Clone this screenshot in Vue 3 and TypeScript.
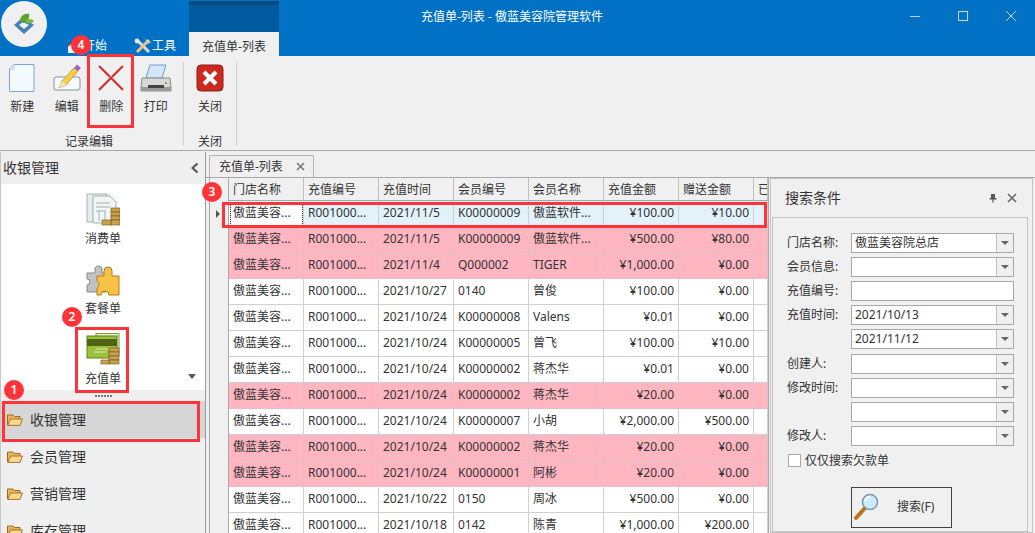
<script setup lang="ts">
interface Row { shop: string; no: string; time: string; member: string; name: string; amount: string; gift: string; pink?: boolean; sel?: boolean }
const S = '傲蓝美容...'
const N = 'R001000...'
const rows: Row[] = [
  { shop: S, no: N, time: '2021/11/5', member: 'K00000009', name: '傲蓝软件...', amount: '¥100.00', gift: '¥10.00', sel: true },
  { shop: S, no: N, time: '2021/11/5', member: 'K00000009', name: '傲蓝软件...', amount: '¥500.00', gift: '¥80.00', pink: true },
  { shop: S, no: N, time: '2021/11/4', member: 'Q000002', name: 'TIGER', amount: '¥1,000.00', gift: '¥0.00', pink: true },
  { shop: S, no: N, time: '2021/10/27', member: '0140', name: '曾俊', amount: '¥100.00', gift: '¥0.00' },
  { shop: S, no: N, time: '2021/10/24', member: 'K00000008', name: 'Valens', amount: '¥0.01', gift: '¥0.00' },
  { shop: S, no: N, time: '2021/10/24', member: 'K00000005', name: '曾飞', amount: '¥100.00', gift: '¥10.00' },
  { shop: S, no: N, time: '2021/10/24', member: 'K00000002', name: '蒋杰华', amount: '¥0.01', gift: '¥0.00' },
  { shop: S, no: N, time: '2021/10/24', member: 'K00000002', name: '蒋杰华', amount: '¥20.00', gift: '¥0.00', pink: true },
  { shop: S, no: N, time: '2021/10/24', member: 'K00000007', name: '小胡', amount: '¥2,000.00', gift: '¥500.00' },
  { shop: S, no: N, time: '2021/10/24', member: 'K00000002', name: '蒋杰华', amount: '¥20.00', gift: '¥0.00', pink: true },
  { shop: S, no: N, time: '2021/10/24', member: 'K00000001', name: '阿彬', amount: '¥20.00', gift: '¥0.00', pink: true },
  { shop: S, no: N, time: '2021/10/22', member: '0150', name: '周冰', amount: '¥500.00', gift: '¥0.00' },
  { shop: S, no: N, time: '2021/10/18', member: '0142', name: '陈青', amount: '¥1,000.00', gift: '¥200.00' },
]
const heads = ['门店名称', '充值编号', '充值时间', '会员编号', '会员名称', '充值金额', '赠送金额', '已']
const fields = [
  { label: '门店名称:', value: '傲蓝美容院总店', combo: true },
  { label: '会员信息:', value: '', combo: true },
  { label: '充值编号:', value: '', combo: false },
  { label: '充值时间:', value: '2021/10/13', combo: true },
  { label: '', value: '2021/11/12', combo: true },
  { label: '创建人:', value: '', combo: true },
  { label: '修改时间:', value: '', combo: true },
  { label: '', value: '', combo: true },
  { label: '修改人:', value: '', combo: true },
]
const navs = ['收银管理', '会员管理', '营销管理', '库存管理']
</script>

<template>
  <div class="app">
    <header class="titlebar">
      <div class="logo">
        <svg width="26" height="26" viewBox="0 0 26 26">
          <path d="M3 14 L12 6 L23 14 L13 23 Z" fill="#4a80b8" />
          <path d="M8 14 L12 11 L18 14 L13 18 Z" fill="#eef3f8" />
          <path d="M9 9 C10 3 16 2 18 3 C19 7 16 12 12 12 Z" fill="#5da42c" />
          <path d="M15 9 C18 7 21 8 23 10 C21 13 17 13 15 11 Z" fill="#7cbb3c" />
        </svg>
      </div>
      <nav class="menus">
        <div class="menu start">
          <svg width="16" height="16" viewBox="0 0 16 16"><path d="M1 8 L8 2 L15 8 V15 H1 Z" fill="#f2f2f2" /><path d="M1 8 L8 2 L15 8" fill="none" stroke="#a33" stroke-width="1.5" /></svg>
          <span>开始</span>
        </div>
        <div class="menu tools">
          <svg width="18" height="16" viewBox="0 0 18 16">
            <path d="M3 2 L15 14" stroke="#d7dde2" stroke-width="3" />
            <path d="M15 2 L3 14" stroke="#f0c27a" stroke-width="3" />
            <path d="M11 1 L17 4 L14 6 Z" fill="#c6ced6" />
            <circle cx="3" cy="3" r="2.4" fill="#e6ebef" />
          </svg>
          <span>工具</span>
        </div>
        <div class="context">
          <div class="context-head"></div>
          <div class="context-tab">充值单-列表</div>
        </div>
      </nav>
      <div class="title">充值单-列表 - 傲蓝美容院管理软件</div>
      <div class="winctl">
        <svg width="12" height="12" viewBox="0 0 12 12"><path d="M1 6.5 H11" stroke="#b9cfe6" /></svg>
        <svg width="12" height="12" viewBox="0 0 12 12"><rect x="1.5" y="1.5" width="9" height="9" fill="none" stroke="#c9d8e8" /></svg>
        <svg width="12" height="12" viewBox="0 0 12 12"><path d="M1 1 L11 11 M11 1 L1 11" stroke="#c9d8e8" /></svg>
      </div>
    </header>

    <section class="ribbon">
      <div class="group first">
        <div class="buttons">
          <div class="rbtn">
            <svg width="30" height="30" viewBox="0 0 30 30"><path d="M7 1.5 H27 V28.5 H2.5 V6 Z" fill="#f4f9fe" stroke="#7ba6d6" /><path d="M7 1.5 V6 H2.5 Z" fill="#fff" stroke="#a9c6e6" /></svg>
            <span>新建</span>
          </div>
          <div class="rbtn">
            <svg width="30" height="30" viewBox="0 0 30 30">
              <rect x="2" y="14" width="26" height="13" rx="2" fill="#f6fafd" stroke="#8a8f96" />
              <path d="M7 25 L10 18 L22 5 L26 8 L14 22 Z" fill="#f3cf4a" stroke="#b08a22" stroke-width=".7" />
              <path d="M22 5 L25 1.5 L29 5 L26 8 Z" fill="#a35bc8" />
              <path d="M7 25 L10 18 L14 22 Z" fill="#f8e8c0" />
            </svg>
            <span>编辑</span>
          </div>
          <div class="rbtn">
            <svg width="30" height="30" viewBox="0 0 30 30"><path d="M3 3 L27 27 M27 3 L3 27" stroke="#cf2a2a" stroke-width="1.8" /><path d="M5 3 L28 26 M25 3 L2 26" stroke="#e8a0a0" stroke-width=".6" /></svg>
            <span>删除</span>
          </div>
          <div class="rbtn">
            <svg width="32" height="30" viewBox="0 0 32 30">
              <path d="M10 2 H26 L22 15 H6 Z" fill="#d3e6f8" stroke="#6c9bd2" />
              <path d="M2 15 H30 L31 24 V28 H1 V24 Z" fill="#d8d8d8" stroke="#8a8a8a" />
              <path d="M1 24 H31 V28 H1 Z" fill="#9a9a9a" />
              <rect x="8" y="22" width="16" height="3" fill="#444" />
              <rect x="25" y="19" width="2" height="2" fill="#6fc04a" />
            </svg>
            <span>打印</span>
          </div>
        </div>
        <div class="glabel">记录编辑</div>
      </div>
      <div class="group second">
        <div class="buttons">
          <div class="rbtn">
            <svg width="30" height="30" viewBox="0 0 30 30">
              <rect x="2" y="2" width="26" height="26" rx="4" fill="#cc2a1f" stroke="#8e1c14" />
              <path d="M9 9 L21 21 M21 9 L9 21" stroke="#fff" stroke-width="4.2" />
            </svg>
            <span>关闭</span>
          </div>
        </div>
        <div class="glabel">关闭</div>
      </div>
    </section>

    <main class="workspace">
      <aside class="sidebar">
        <div class="side-head">
          <span>收银管理</span>
          <svg width="10" height="12" viewBox="0 0 10 12"><path d="M7.5 1.5 L2.5 6 L7.5 10.5" fill="none" stroke="#555" stroke-width="2" /></svg>
        </div>
        <div class="side-items">
          <div class="side-item">
            <svg width="34" height="34" viewBox="0 0 34 34">
              <rect x="1" y="1" width="20" height="28" fill="#e4ecec" stroke="#9fb3b3" />
              <path d="M7 3 H24 L30 9 V30 H7 Z" fill="#f1f5f5" stroke="#9fb3b3" />
              <path d="M10 10 H24 M10 14 H24 M10 18 H20 M13 18 V28 M19 18 V28" stroke="#9fb3b3" />
              <g fill="#c9a34c" stroke="#6e5520" stroke-width=".6"><rect x="25" y="15" width="9" height="4" /><rect x="25" y="19" width="9" height="4" /><rect x="25" y="23" width="9" height="4" /><rect x="25" y="27" width="9" height="5" /><rect x="16" y="27" width="9" height="5" /></g>
            </svg>
            <span>消费单</span>
          </div>
          <div class="side-item">
            <svg width="34" height="34" viewBox="0 0 34 34">
              <path d="M1 10 H9 V5 A4 4 0 0 1 16 5 V10 H20 V29 H1 V22 A3 3 0 0 0 1 16 Z" fill="#c0c2c4" stroke="#85888b" />
              <path d="M11 13 H18 V8 A4 4 0 0 1 26 8 V13 H33 V32 H23 A4 4 0 0 0 15 32 H11 V25 A4 4 0 0 0 11 18 Z" fill="#f7c244" stroke="#b97a1e" />
            </svg>
            <span>套餐单</span>
          </div>
          <div class="side-item">
            <svg width="34" height="34" viewBox="0 0 34 34">
              <rect x="10" y="0.5" width="23" height="22" fill="#e2efc4" stroke="#7ea03a" />
              <rect x="1" y="3" width="30" height="22" fill="#9cc23d" stroke="#5f7e1e" />
              <rect x="1" y="6" width="30" height="7" fill="#4f6413" />
              <path d="M10 16 H22 M8 19 H20" stroke="#dcecae" />
              <g fill="#c9a34c" stroke="#6e5520" stroke-width=".6"><rect x="23" y="15" width="10" height="4" /><rect x="23" y="19" width="10" height="4" /><rect x="23" y="23" width="10" height="4" /><rect x="23" y="27" width="10" height="4" /><rect x="15" y="27" width="8" height="4" /></g>
            </svg>
            <span>充值单</span>
          </div>
          <div class="more"></div>
        </div>
        <div class="gripper"><i v-for="n in 6" :key="n"></i></div>
        <div class="nav">
          <div v-for="(n, i) in navs" :key="n" class="nav-item" :class="{ on: i === 0 }">
            <svg width="16" height="13" viewBox="0 0 16 13">
              <path d="M.5 12 V2 H6 L7.5 3.5 H13 V6" fill="#e8b45c" stroke="#9d6a2a" />
              <path d="M.8 12.4 L3.5 6 H15.5 L13 12.4 Z" fill="#fbd98c" stroke="#a8702c" />
            </svg>
            <span>{{ n }}</span>
          </div>
        </div>
      </aside>

      <div class="content">
        <div class="tabstrip">
          <div class="doc-tab">
            <span>充值单-列表</span>
            <svg width="9" height="9" viewBox="0 0 9 9"><path d="M1 1 L8 8 M8 1 L1 8" stroke="#777" stroke-width="1.6" /></svg>
          </div>
        </div>
        <div class="panes">
          <div class="grid">
            <div class="grow ghead">
              <div class="indicator"></div>
              <div v-for="h in heads" :key="h" class="gcell">{{ h }}</div>
            </div>
            <div v-for="(r, i) in rows" :key="i" class="grow" :class="{ pink: r.pink, sel: r.sel }">
              <div class="indicator"><b v-if="r.sel"></b></div>
              <div class="gcell shop">{{ r.shop }}</div>
              <div class="gcell">{{ r.no }}</div>
              <div class="gcell">{{ r.time }}</div>
              <div class="gcell">{{ r.member }}</div>
              <div class="gcell">{{ r.name }}</div>
              <div class="gcell num">{{ r.amount }}</div>
              <div class="gcell num">{{ r.gift }}</div>
              <div class="gcell"></div>
            </div>
          </div>

          <div class="search">
            <div class="search-head">
              <span>搜索条件</span>
              <svg width="10" height="10" viewBox="0 0 10 10"><path d="M3 1 H7 V5 H8.5 V6.5 H5.6 V9.5 H4.4 V6.5 H1.5 V5 H3 Z" fill="#555" /></svg>
              <svg width="10" height="10" viewBox="0 0 10 10"><path d="M1 1 L9 9 M9 1 L1 9" stroke="#666" stroke-width="1.6" /></svg>
            </div>
            <div class="search-box">
              <div v-for="(f, i) in fields" :key="i" class="field">
                <label>{{ f.label }}</label>
                <div class="input">
                  <span class="val">{{ f.value }}</span>
                  <span v-if="f.combo" class="drop"><i></i></span>
                </div>
              </div>
              <div class="check"><i></i><span>仅仅搜索欠款单</span></div>
              <div class="search-btn">
                <svg width="26" height="28" viewBox="0 0 26 28">
                  <path d="M2 25 L11 15" stroke="#b8741e" stroke-width="4" stroke-linecap="round" />
                  <circle cx="16" cy="9" r="7.5" fill="#cfeaf8" stroke="#7a9ab5" stroke-width="1.6" />
                  <path d="M11 8 A5 5 0 0 1 16 4" fill="none" stroke="#fff" stroke-width="1.5" />
                </svg>
                <span>搜索(F)</span>
              </div>
            </div>
          </div>
        </div>
      </div>
    </main>

    <div class="mark m1"></div>
    <div class="mark m2"></div>
    <div class="mark m3"></div>
    <div class="mark m4"></div>
    <div class="badge b1">1</div>
    <div class="badge b2">2</div>
    <div class="badge b3">3</div>
    <div class="badge b4">4</div>
  </div>
</template>

<style scoped>
.app {
  position: relative;
  width: 1035px;
  height: 533px;
  overflow: hidden;
  display: flex;
  flex-direction: column;
  background: #f0f0f0;
  color: #333;
  font: 12px/16px "Noto Sans", "Noto Sans CJK SC", sans-serif;
}
.titlebar {
  height: 56px;
  flex: none;
  display: flex;
  background: #0071c5;
  color: #fff;
}
.logo {
  width: 46px;
  height: 46px;
  margin: 1px 0 0 1px;
  border-radius: 50%;
  background: #f0f0f0;
  display: flex;
  align-items: center;
  justify-content: center;
}
.menus {
  width: 232px;
  display: flex;
  align-items: flex-end;
}
.menu {
  display: flex;
  align-items: center;
  height: 20px;
}
.start { margin-left: 20px; width: 67px; }
.tools { width: 55px; }
.context { width: 90px; display: flex; flex-direction: column; align-self: stretch; }
.context-head {
  flex: 1;
  margin-top: 1px;
  background: #005a9e;
  border-top: 4px solid #004a80;
}
.context-tab {
  height: 24px;
  box-sizing: border-box;
  padding-top: 7px;
  text-align: center;
  background: #f0f0f0;
  color: #333;
}
.title { margin: 9px 0 0 142px; height: 16px; white-space: nowrap; }
.winctl {
  margin: 0 18px 0 auto;
  width: 108px;
  height: 30px;
  padding-top: 10px;
  display: flex;
  justify-content: space-between;
  box-sizing: border-box;
}
.ribbon {
  height: 95px;
  flex: none;
  display: flex;
  background: #f0f0f0;
  border-bottom: 1px solid #a8a8a8;
  box-sizing: border-box;
}
.group {
  display: flex;
  flex-direction: column;
  height: 84px;
  margin-top: 6px;
  border-right: 1px solid #d0d0d0;
  box-sizing: content-box;
}
.first { width: 183px; padding-right: 0; }
.second { width: 52px; }
.buttons { display: flex; flex: 1; }
.first .buttons, .first .glabel { width: 178px; }
.second .buttons, .second .glabel { width: 52px; }
.rbtn {
  flex: 1;
  display: flex;
  flex-direction: column;
  align-items: center;
  padding-top: 1px;
  gap: 6px;
}
.rbtn svg { height: 30px; }
.glabel { height: 16px; line-height: 16px; margin-bottom: -4px; text-align: center; }
.workspace { flex: 1; display: flex; min-height: 0; }
.sidebar {
  width: 206px;
  flex: none;
  border-right: 1px solid #9a9a9a;
  border-left: 1px solid #c8c8c8;
  box-sizing: border-box;
  display: flex;
  flex-direction: column;
  margin-top: 1px;
}
.side-head {
  height: 32px;
  flex: none;
  display: flex;
  align-items: center;
  justify-content: space-between;
  padding: 0 5px 0 2px;
  font-size: 14px;
  background: #efefef;
}
.side-items {
  position: relative;
  height: 206px;
  flex: none;
  overflow: hidden;
  background: #fff;
  display: flex;
  flex-direction: column;
  align-items: center;
  padding-top: 9px;
  box-sizing: border-box;
}
.side-item {
  height: 70px;
  flex: none;
  display: flex;
  flex-direction: column;
  align-items: center;
  gap: 4px;
}
.side-item svg { height: 34px; }
.more {
  position: absolute;
  right: 9px;
  bottom: 11px;
  border: 4px solid transparent;
  border-top: 5px solid #555;
  border-left-width: 4px;
  border-bottom-width: 0;
}
.gripper {
  height: 11px;
  flex: none;
  display: flex;
  justify-content: center;
  align-items: center;
  gap: 1px;
  background: #efefef;
}
.gripper i { width: 2px; height: 2px; background: #777; }
.nav { flex: 1; overflow: hidden; background: #efefef; }
.nav-item {
  height: 37px;
  display: flex;
  align-items: center;
  gap: 7px;
  padding-left: 6px;
  font-size: 14px;
}
.nav-item.on { background: #d6d6d6; }
.content { flex: 1; min-width: 0; display: flex; flex-direction: column; padding-top: 4px; }
.tabstrip {
  height: 22px;
  flex: none;
  padding-left: 3px;
  border-bottom: 1px solid #a8a8a8;
}
.doc-tab {
  width: 105px;
  height: 22px;
  box-sizing: border-box;
  background: #f0f0f0;
  border: 1px solid #b4b4b4;
  border-bottom: 0;
  display: flex;
  align-items: center;
  justify-content: space-between;
  padding: 0 8px 0 9px;
}
.panes { flex: 1; display: flex; min-height: 0; padding-left: 3px; }
.grid {
  width: 559px;
  flex: none;
  overflow: hidden;
  background: #fff;
  border-right: 1px solid #a8a8a8;
  box-sizing: content-box;
  margin-right: 1px;
}
.grow {
  display: grid;
  grid-template-columns: 20px repeat(7, 75px) 14px;
  height: 26px;
}
.ghead { height: 23px; background: #f0f0f0; }
.indicator {
  background: #f0f0f0;
  border-right: 1px solid #a8a8a8;
  border-left: 1px solid #a8a8a8;
  display: flex;
  align-items: center;
  justify-content: center;
}
.indicator b {
  border: 4px solid transparent;
  border-left: 4px solid #555;
  border-right-width: 0;
  margin-left: -2px;
}
.gcell {
  box-sizing: border-box;
  padding: 0 4px;
  border-right: 1px solid #d0d0d0;
  border-bottom: 1px solid #d0d0d0;
  line-height: 24px;
  white-space: nowrap;
  overflow: hidden;
}
.ghead .gcell { line-height: 23px; border-right-color: #c0c0c0; border-bottom-color: #a8a8a8; }
.gcell.num { text-align: right; padding-right: 4px; }
.pink { background: #ffb6c1; }
.pink .gcell { border-color: #e3c0c6; }
.sel { background: #e3f1fa; }
.sel .shop { background: #fff; outline: 1px dotted #333; outline-offset: -2px; }
.search {
  flex: 1;
  margin-right: 2px;
  border: 1px solid #c4c4c4;
  box-sizing: border-box;
  display: flex;
  flex-direction: column;
  padding: 0 4px 0 1px;
}
.search-head {
  height: 38px;
  flex: none;
  display: flex;
  align-items: center;
  padding: 0 11px 0 13px;
  font-size: 14px;
  gap: 9px;
}
.search-head span { margin-right: auto; }
.search-box {
  flex: 1;
  border: 1px solid #c4c4c4;
  padding-top: 13px;
  box-sizing: border-box;
}
.field {
  display: flex;
  align-items: center;
  height: 24.1px;
  padding-left: 14px;
}
.field label { width: 64px; flex: none; white-space: nowrap; }
.input {
  width: 163px;
  height: 20px;
  box-sizing: border-box;
  background: #fff;
  border: 1px solid #a8a8a8;
  display: flex;
  align-items: center;
}
.val { flex: 1; padding-left: 3px; white-space: nowrap; line-height: 18px; }
.drop {
  width: 16px;
  height: 18px;
  background: #f0f0f0;
  border-left: 1px solid #c4c4c4;
  display: flex;
  align-items: center;
  justify-content: center;
}
.drop i {
  border: 4px solid transparent;
  border-top: 4px solid #666;
  border-bottom-width: 0;
}
.check {
  display: flex;
  align-items: center;
  gap: 4px;
  height: 20px;
  margin: 3px 0 0 15px;
}
.check i {
  width: 13px;
  height: 13px;
  box-sizing: border-box;
  background: #fff;
  border: 1px solid #a8a8a8;
}
.search-btn {
  width: 101px;
  height: 41px;
  margin: 16px 0 0 78px;
  box-sizing: border-box;
  border: 1px solid #444;
  display: flex;
  align-items: center;
  padding-left: 2px;
  gap: 17px;
}
.mark {
  position: absolute;
  border: 3px solid #ff3338;
  box-sizing: border-box;
}
.m1 { left: 2px; top: 401px; width: 198px; height: 41px; }
.m2 { left: 75px; top: 327px; width: 54px; height: 66px; }
.m3 { left: 222px; top: 202px; width: 545px; height: 26px; }
.m4 { left: 87px; top: 54px; width: 47px; height: 74px; }
.badge {
  position: absolute;
  width: 20px;
  height: 20px;
  border-radius: 50%;
  background: #ff3338;
  color: #fff;
  font-size: 12px;
  font-weight: 600;
  line-height: 20px;
  text-align: center;
}
.b1 { left: 4px; top: 380px; }
.b2 { left: 62px; top: 307px; }
.b3 { left: 202px; top: 182px; }
.b4 { left: 71px; top: 35px; }
</style>
